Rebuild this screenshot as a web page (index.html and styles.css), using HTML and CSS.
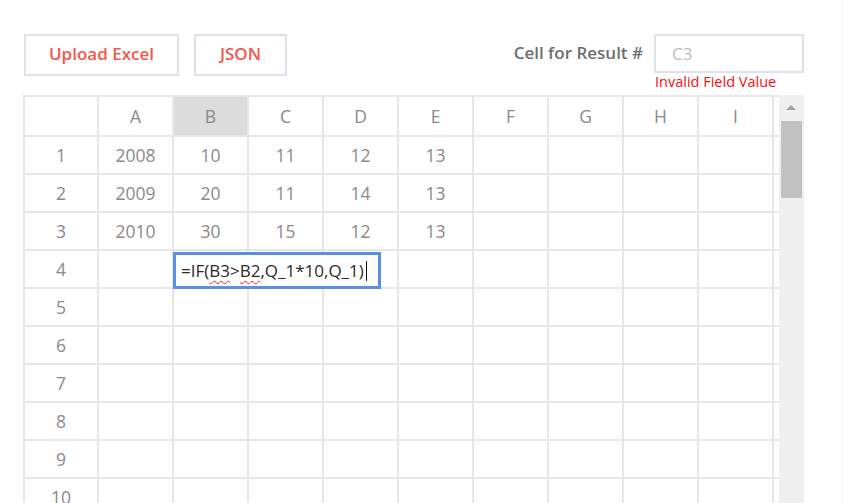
FILE: index.html
```html
<!DOCTYPE html>
<html>
<head>
<meta charset="utf-8">
<link rel="stylesheet" href="styles.css">
</head>
<body>
<div class="page">
  <div class="wrap">
    <div class="topbar">
      <button class="btn btn-upload">Upload Excel</button>
      <button class="btn btn-json">JSON</button>
      <div class="result">
        <span class="result-label">Cell for Result #</span>
        <div class="result-input">C3</div>
        <div class="result-error">Invalid Field Value</div>
      </div>
    </div>
    <div class="sheet">
      <div class="viewport">
        <div class="grid">
          <div class="c"></div><div class="c">A</div><div class="c sel">B</div><div class="c">C</div><div class="c">D</div><div class="c">E</div><div class="c">F</div><div class="c">G</div><div class="c">H</div><div class="c">I</div><div class="c"></div>
          <div class="c">1</div><div class="c">2008</div><div class="c">10</div><div class="c">11</div><div class="c">12</div><div class="c">13</div><div class="c"></div><div class="c"></div><div class="c"></div><div class="c"></div><div class="c"></div>
          <div class="c">2</div><div class="c">2009</div><div class="c">20</div><div class="c">11</div><div class="c">14</div><div class="c">13</div><div class="c"></div><div class="c"></div><div class="c"></div><div class="c"></div><div class="c"></div>
          <div class="c">3</div><div class="c">2010</div><div class="c">30</div><div class="c">15</div><div class="c">12</div><div class="c">13</div><div class="c"></div><div class="c"></div><div class="c"></div><div class="c"></div><div class="c"></div>
          <div class="c">4</div><div class="c"></div><div class="c"></div><div class="c"></div><div class="c"></div><div class="c"></div><div class="c"></div><div class="c"></div><div class="c"></div><div class="c"></div><div class="c"></div>
          <div class="c">5</div><div class="c"></div><div class="c"></div><div class="c"></div><div class="c"></div><div class="c"></div><div class="c"></div><div class="c"></div><div class="c"></div><div class="c"></div><div class="c"></div>
          <div class="c">6</div><div class="c"></div><div class="c"></div><div class="c"></div><div class="c"></div><div class="c"></div><div class="c"></div><div class="c"></div><div class="c"></div><div class="c"></div><div class="c"></div>
          <div class="c">7</div><div class="c"></div><div class="c"></div><div class="c"></div><div class="c"></div><div class="c"></div><div class="c"></div><div class="c"></div><div class="c"></div><div class="c"></div><div class="c"></div>
          <div class="c">8</div><div class="c"></div><div class="c"></div><div class="c"></div><div class="c"></div><div class="c"></div><div class="c"></div><div class="c"></div><div class="c"></div><div class="c"></div><div class="c"></div>
          <div class="c">9</div><div class="c"></div><div class="c"></div><div class="c"></div><div class="c"></div><div class="c"></div><div class="c"></div><div class="c"></div><div class="c"></div><div class="c"></div><div class="c"></div>
          <div class="c">10</div><div class="c"></div><div class="c"></div><div class="c"></div><div class="c"></div><div class="c"></div><div class="c"></div><div class="c"></div><div class="c"></div><div class="c"></div><div class="c"></div>
        </div>
        <div class="editor">=IF(<span class="spell">B3</span>&gt;<span class="spell">B2</span>,Q_1*10,Q_1)<span class="caret"></span></div>
      </div>
      <div class="vscroll">
        <div class="vscroll-up"></div>
        <div class="vscroll-thumb"></div>
      </div>
    </div>
  </div>
</div>
</body>
</html>
```
FILE: styles.css
```css
html, body {
  margin: 0;
  padding: 0;
  overflow: hidden;
  background: #fff;
}
body {
  font-family: "Open Sans", "Liberation Sans", sans-serif;
}
.page {
  width: 842px;
  height: 503px;
  border-right: 1px solid #f3f3f3;
  overflow: hidden;
}
.wrap {
  width: 781px;
  padding-left: 23px;
}
.topbar {
  display: flex;
  align-items: flex-start;
  padding-top: 34px;
}
.btn {
  box-sizing: border-box;
  height: 42px;
  border: 2px solid #dde3e8;
  background: #fff;
  color: #f2584b;
  font-family: "Open Sans", sans-serif;
  font-weight: 600;
  font-size: 17px;
  line-height: 20px;
  padding: 0 0 3px 0;
  margin: 0;
}
.btn-upload {
  width: 155px;
  margin-left: 1px;
}
.btn-json {
  width: 93px;
  margin-left: 15px;
}
.result {
  margin-left: auto;
  display: grid;
  grid-template-columns: auto 150px;
  column-gap: 11px;
  align-items: center;
}
.result-label {
  color: #6b6f73;
  font-weight: 600;
  font-size: 17px;
  padding-bottom: 2px;
}
.result-input {
  box-sizing: border-box;
  height: 39px;
  border: 2px solid #dde3e8;
  padding-left: 16px;
  display: flex;
  align-items: center;
  color: #bcbcbc;
  font-size: 17px;
}
.result-error {
  grid-column: 2;
  padding-left: 1px;
  color: #f21010;
  font-size: 14.5px;
  line-height: 18px;
  white-space: nowrap;
}
.sheet {
  display: flex;
  margin-top: 4px;
}
.viewport {
  position: relative;
  width: 756px;
  height: 420px;
  overflow: hidden;
}
.grid {
  display: grid;
  grid-template-columns: 72px repeat(10, 73px);
  grid-template-rows: 38px;
  grid-auto-rows: 36px;
  gap: 2px;
  padding: 2px 0 0 2px;
  background: #e7e7e7;
  width: max-content;
}
.c {
  background: #fff;
  display: flex;
  align-items: center;
  justify-content: center;
  color: #8a8a8a;
  font-size: 17.5px;
  font-weight: 400;
}
.c.sel {
  background: #dcdcdc;
}
.editor {
  position: absolute;
  left: 150px;
  top: 157px;
  box-sizing: border-box;
  width: 208px;
  height: 37px;
  border: 3px solid #5b8fe6;
  background: #fff;
  padding-left: 5px;
  display: flex;
  align-items: center;
  color: #2a2a2a;
  font-size: 17px;
  white-space: nowrap;
}
.spell {
  text-decoration: underline wavy #ff2a2a;
  text-decoration-thickness: 1px;
  text-underline-offset: 3px;
}
.caret {
  display: inline-block;
  width: 0;
  height: 20px;
  border-left: 1px solid #111;
  margin-left: 2px;
}
.vscroll {
  position: relative;
  width: 25px;
  height: 420px;
  background: #f0f0f0;
}
.vscroll-up {
  position: absolute;
  left: 7px;
  top: 10px;
  width: 0;
  height: 0;
  border-left: 5px solid transparent;
  border-right: 5px solid transparent;
  border-bottom: 5px solid #a3a3a3;
}
.vscroll-thumb {
  position: absolute;
  left: 2px;
  top: 26px;
  width: 21px;
  height: 77px;
  background: #c1c1c1;
}
```
